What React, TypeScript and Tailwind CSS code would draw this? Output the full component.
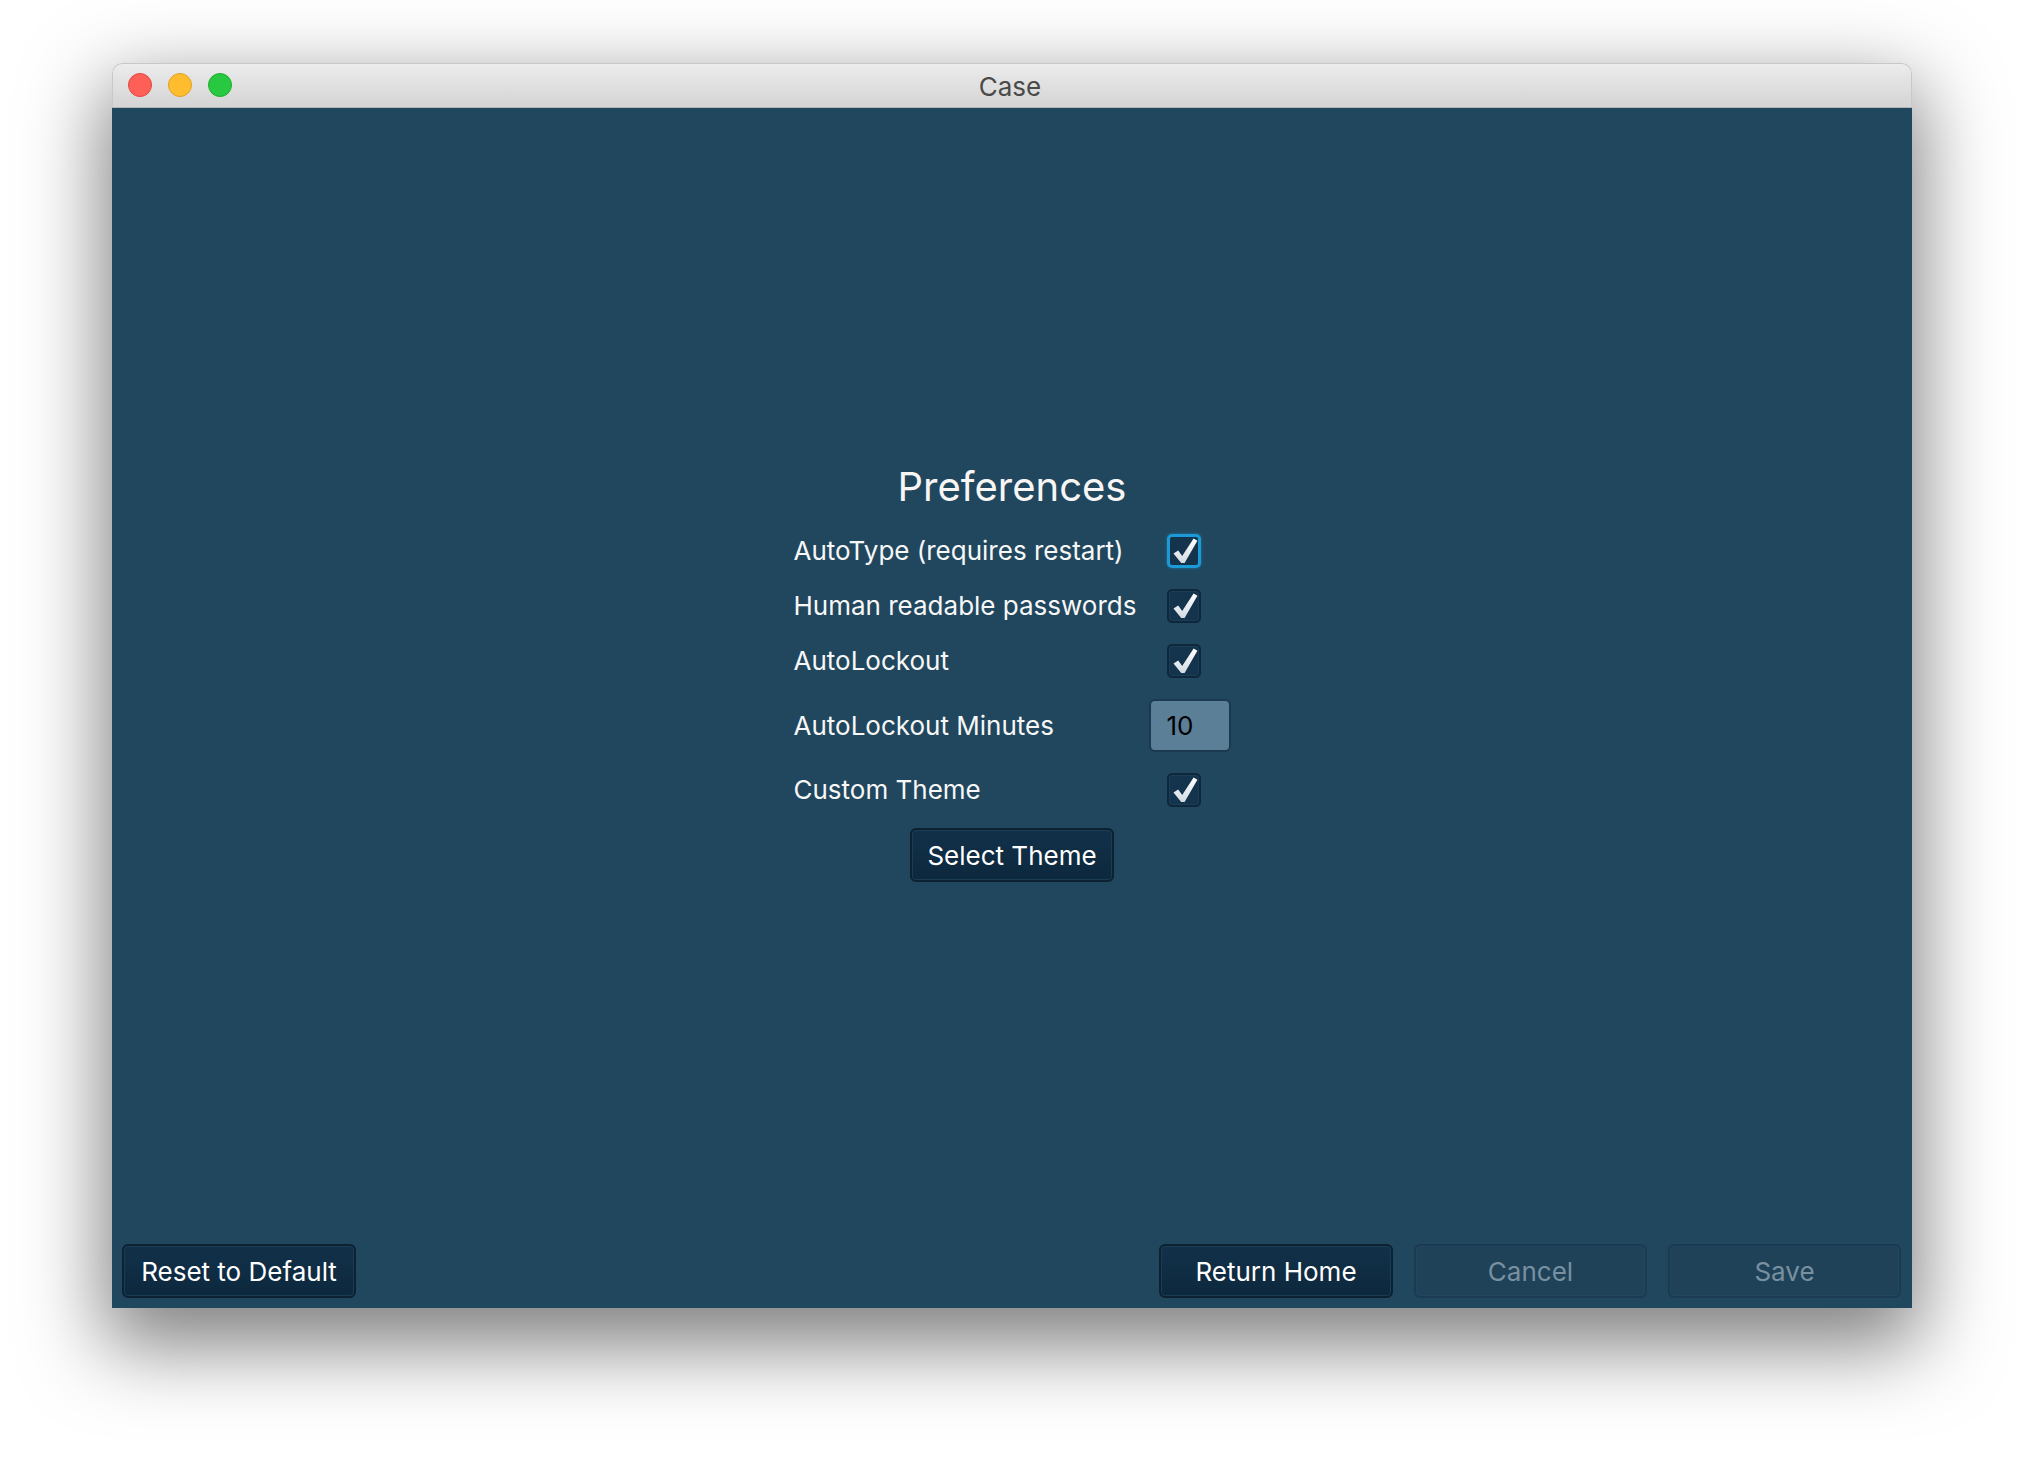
import React from "react";

const font = { fontFamily: "Inter, 'Noto Sans', sans-serif" };

function Check({ focused = false }: { focused?: boolean }) {
  return (
    <div
      className={
        "relative w-[34px] h-[34px] rounded-[5px] bg-[#13344c] " +
        (focused
          ? "border-[3px] border-[#1b9ad6] shadow-[0_0_3px_rgba(27,154,214,0.6)]"
          : "border-2 border-[#0e273a] shadow-[inset_0_0_0_1px_#1b3e57]")
      }
    >
      <svg
        viewBox="0 0 34 34"
        className={focused ? "absolute -left-[3px] -top-[3px] w-[34px] h-[34px]" : "absolute -left-[2px] -top-[2px] w-[34px] h-[34px]"}
      >
        <defs>
          <linearGradient id="ck" x1="0" y1="0" x2="0" y2="1">
            <stop offset="0" stopColor="#ffffff" />
            <stop offset="1" stopColor="#d3dbe2" />
          </linearGradient>
        </defs>
        <path
          d="M6.5 19.5 L11.2 16.4 L15.2 22 L26.6 4.6 L30.4 6.8 L17.6 29 L14.2 29 Z"
          fill="url(#ck)"
        />
      </svg>
    </div>
  );
}

function Btn({ children, disabled = false, className = "" }: { children: React.ReactNode; disabled?: boolean; className?: string }) {
  return (
    <div
      className={
        "h-[54px] rounded-[6px] border-2 flex items-center justify-center text-[26px] " +
        (disabled
          ? "border-[#1b3b52] bg-[#1f4259] text-[#7890a0] shadow-[inset_0_0_0_1px_#22475e]"
          : "border-[#0c2233] bg-gradient-to-b from-[#123149] to-[#0c283d] text-white shadow-[inset_0_0_0_1px_#1a3d55]") +
        " " +
        className
      }
    >
      {children}
    </div>
  );
}

export default function App() {
  return (
    <div className="w-[2024px] h-[1468px] bg-white pt-[63px] pl-[112px]" style={font}>
      <div className="w-[1800px] h-[1245px] flex flex-col rounded-t-[10px] shadow-[0_30px_80px_8px_rgba(0,0,0,0.5)]">
        {/* title bar */}
        <div className="relative h-[44px] shrink-0 rounded-t-[10px] border border-b-0 border-[#c8c8c8] bg-gradient-to-b from-[#ececec] to-[#d4d4d4] flex items-center justify-center">
          <div className="absolute left-[15px] top-[9px] flex gap-[16px]">
            <div className="w-[24px] h-[24px] rounded-full bg-[#fe5f57] border border-[#e2463f]" />
            <div className="w-[24px] h-[24px] rounded-full bg-[#febc2e] border border-[#dfa123]" />
            <div className="w-[24px] h-[24px] rounded-full bg-[#28c840] border border-[#1dad2b]" />
          </div>
          <span className="text-[26px] text-[#4a4a4a] -ml-[4px] mt-[2px]">Case</span>
        </div>
        <div className="h-[1px] bg-[#b5b5b5] shrink-0" />
        {/* content */}
        <div className="flex-1 bg-[#21475e] flex flex-col">
          <div className="flex-1 flex flex-col items-center pt-[355px]">
            <div className="text-[40px] leading-[48px] text-[#f8f6f4] mb-[23px]">Preferences</div>
            <div className="grid grid-cols-[355px_82px] gap-y-[21px] text-[26px] text-[#f7f7f7] items-center">
              <div className="leading-[34px]">AutoType (requires restart)</div>
              <div className="pl-[18px]"><Check focused /></div>
              <div className="leading-[34px]">Human readable passwords</div>
              <div className="pl-[18px]"><Check /></div>
              <div className="leading-[34px]">AutoLockout</div>
              <div className="pl-[18px]"><Check /></div>
              <div className="leading-[34px]">AutoLockout Minutes</div>
              <div className="h-[53px] rounded-[6px] border-2 border-[#1b3a50] bg-[#5b7f97] text-black flex items-center pl-[16px]">10</div>
              <div className="leading-[34px]">Custom Theme</div>
              <div className="pl-[18px]"><Check /></div>
            </div>
            <Btn className="w-[204px] mt-[21px]">Select Theme</Btn>
          </div>
          <div className="flex items-center px-[10px] pb-[10px]">
            <Btn className="w-[234px]">Reset to Default</Btn>
            <div className="flex-1" />
            <div className="flex gap-[21px] pr-[1px]">
              <Btn className="w-[234px]">Return Home</Btn>
              <Btn className="w-[233px]" disabled>Cancel</Btn>
              <Btn className="w-[233px]" disabled>Save</Btn>
            </div>
          </div>
        </div>
      </div>
    </div>
  );
}
